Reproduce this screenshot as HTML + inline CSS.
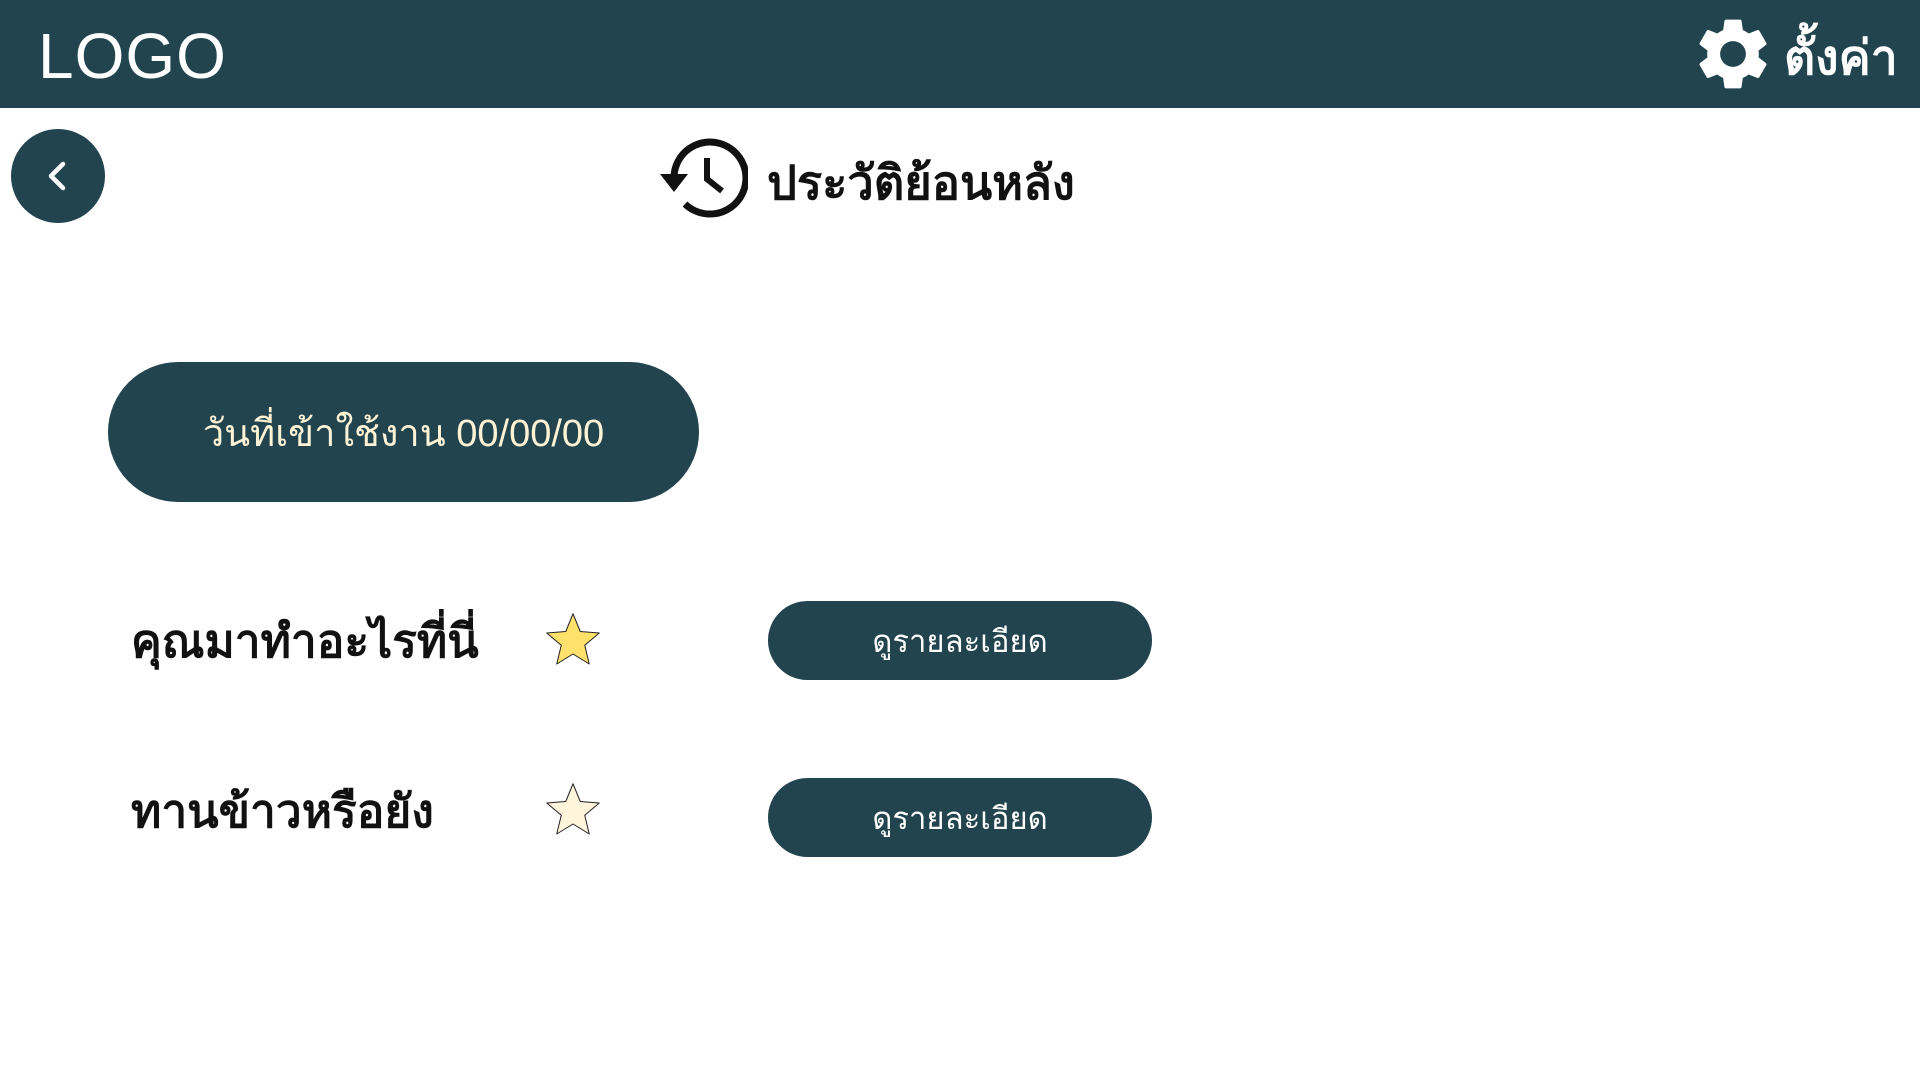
<!DOCTYPE html>
<html><head><meta charset="utf-8"><style>
*{margin:0;padding:0;box-sizing:border-box}
body{width:1920px;height:1080px;background:#fff;position:relative;overflow:hidden;font-family:"Liberation Sans","Noto Sans CJK SC",sans-serif}
.hdr{position:absolute;left:0;top:0;width:1920px;height:108px;background:#22444f}
.logo{position:absolute;left:38px;top:20px;font-size:64px;color:#fff;letter-spacing:1px;line-height:72px}
.set{position:absolute;left:1784px;top:28px;font-size:48px;color:#fff;font-weight:bold;line-height:62px}
.back{position:absolute;left:11px;top:129px;width:94px;height:94px;border-radius:50%;background:#22444f}
.title{position:absolute;left:767px;top:152px;font-size:47px;font-weight:bold;color:#111;line-height:62px}
.pill{position:absolute;left:108px;top:362px;width:591px;height:140px;border-radius:70px;background:#22444f;color:#fff3d6;font-size:38px;display:flex;align-items:center;justify-content:center}
.q{position:absolute;left:131px;font-size:46px;font-weight:bold;color:#111;line-height:62px}
.btn{position:absolute;left:768px;width:384px;height:79px;border-radius:40px;background:#22444f;color:#fff;font-size:31px;display:flex;align-items:center;justify-content:center}
.star{position:absolute;left:543px;width:60px;height:60px}
</style></head><body>
<div class="hdr"></div>
<div class="logo">LOGO</div>
<svg style="position:absolute;left:1690px;top:11px" width="86" height="86" viewBox="0 0 24 24"><path fill="#fff" d="M19.14 12.94c.04-.3.06-.61.06-.94 0-.32-.02-.64-.07-.94l2.03-1.58a.49.49 0 0 0 .12-.61l-1.92-3.32a.49.49 0 0 0-.59-.22l-2.39.96c-.5-.38-1.030-.7-1.62-.94l-.36-2.54a.48.48 0 0 0-.48-.41h-3.84c-.24 0-.43.17-.47.41l-.36 2.54c-.59.24-1.13.57-1.62.94l-2.39-.96a.48.48 0 0 0-.59.22L2.74 8.870c-.12.21-.08.47.12.61l2.03 1.58c-.05.3-.09.63-.09.94s.02.64.07.94l-2.03 1.58a.49.49 0 0 0-.12.61l1.920 3.32c.12.22.37.29.59.22l2.39-.96c.5.38 1.03.7 1.62.94l.36 2.54c.05.24.24.41.48.41h3.84c.24 0 .44-.17.47-.41l.36-2.54c.59-.24 1.13-.56 1.62-.94l2.39.96c.22.08.47 0 .59-.22l1.92-3.32c.12-.22.07-.47-.12-.61l-2.010-1.58zM12 15.6A3.6 3.6 0 1 1 12 8.4a3.6 3.6 0 0 1 0 7.2z"/></svg>
<div class="set">ตั้งค่า</div>
<div class="back"></div>
<svg style="position:absolute;left:40px;top:158px" width="36" height="36" viewBox="0 0 36 36"><path d="M23 6 L11 18 L23 30" stroke="#fff" stroke-width="4.5" fill="none" stroke-linecap="round" stroke-linejoin="round"/></svg>
<svg style="position:absolute;left:652px;top:136px" width="96" height="86" viewBox="0 0 96 86"><path d="M22 40 A36 36 0 1 1 33 68" stroke="#111" stroke-width="7" fill="none"/><path d="M8 38 L36 38 L22 56 Z" fill="#111"/><path d="M55 22 V43 L70 55" stroke="#111" stroke-width="6" fill="none"/></svg>
<div class="title">ประวัติย้อนหลัง</div>
<div class="pill">วันที่เข้าใช้งาน 00/00/00</div>
<div class="q" style="top:610px">คุณมาทำอะไรที่นี่</div>
<svg class="star" style="top:610px" viewBox="0 0 24 24"><path d="M12 1.5 L14.9 8.6 L22.5 9.2 L16.7 14.1 L18.5 21.6 L12 17.6 L5.5 21.6 L7.3 14.1 L1.5 9.2 L9.1 8.6 Z" fill="#ffe16b" stroke="#222" stroke-width=".4" stroke-linejoin="round"/></svg>
<div class="btn" style="top:601px">ดูรายละเอียด</div>
<div class="q" style="top:780px">ทานข้าวหรือยัง</div>
<svg class="star" style="top:780px" viewBox="0 0 24 24"><path d="M12 1.5 L14.9 8.6 L22.5 9.2 L16.7 14.1 L18.5 21.6 L12 17.6 L5.5 21.6 L7.3 14.1 L1.5 9.2 L9.1 8.6 Z" fill="#fff4dc" stroke="#222" stroke-width=".4" stroke-linejoin="round"/></svg>
<div class="btn" style="top:778px">ดูรายละเอียด</div>
</body></html>
